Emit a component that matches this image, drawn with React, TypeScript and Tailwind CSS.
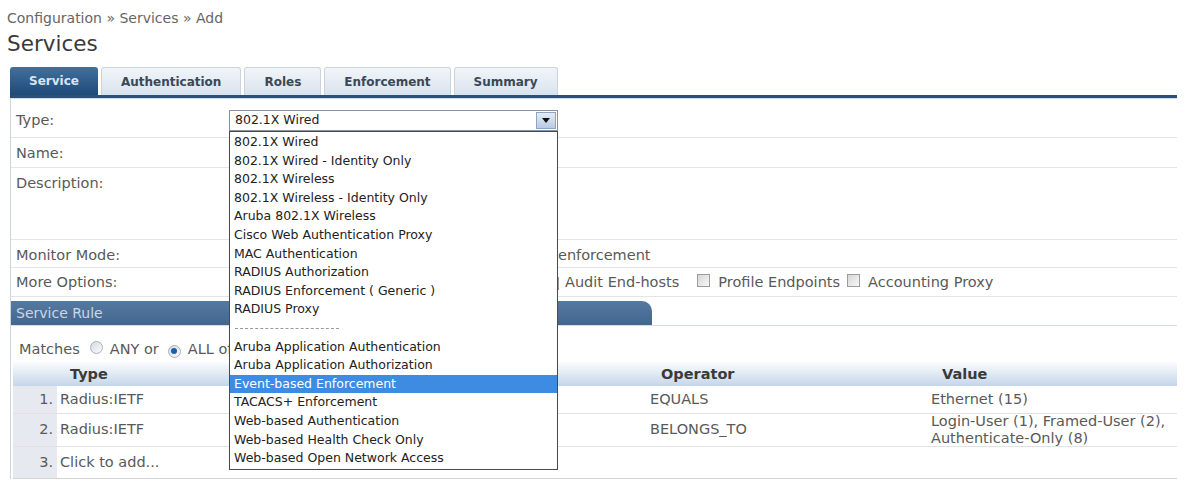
import React from "react";

// dropdown entries of the Type select
const serviceTypes: string[] = [
  "802.1X Wired",
  "802.1X Wired - Identity Only",
  "802.1X Wireless",
  "802.1X Wireless - Identity Only",
  "Aruba 802.1X Wireless",
  "Cisco Web Authentication Proxy",
  "MAC Authentication",
  "RADIUS Authorization",
  "RADIUS Enforcement ( Generic )",
  "RADIUS Proxy",
  "---",
  "Aruba Application Authentication",
  "Aruba Application Authorization",
  "Event-based Enforcement",
  "TACACS+ Enforcement",
  "Web-based Authentication",
  "Web-based Health Check Only",
  "Web-based Open Network Access",
];

const tabs = ["Service", "Authentication", "Roles", "Enforcement", "Summary"];

interface RuleRow {
  type: string;
  operator: string;
  value: string[];
  h: string;
}

const rules: RuleRow[] = [
  { type: "Radius:IETF", operator: "EQUALS", value: ["Ethernet (15)"], h: "h-[28px]" },
  {
    type: "Radius:IETF",
    operator: "BELONGS_TO",
    value: ["Login-User (1), Framed-User (2),", "Authenticate-Only (8)"],
    h: "h-[33px]",
  },
];

const Checkbox = () => (
  <span className="inline-block shrink-0 w-[13px] h-[13px] border border-[#9c9c9c] bg-linear-to-br from-[#d6d6d6] to-[#f8f8f8]" />
);

const Radio = ({ on }: { on?: boolean }) => (
  <span className="inline-flex shrink-0 items-center justify-center w-[13px] h-[13px] rounded-full border border-[#a9b1ba] bg-linear-to-br from-[#d5dbe1] to-[#fbfbfb]">
    {on && <span className="w-[6px] h-[6px] rounded-full bg-[#1d5ea6]" />}
  </span>
);

const TypeSelect = () => (
  <div className="relative w-[329px] h-[21px] border border-[#8094a8] bg-white flex items-center">
    <span className="pl-[5px] text-[12.5px] text-[#222]">802.1X Wired</span>
    <span className="absolute right-[1px] top-[1px] w-[20px] h-[17px] flex items-center justify-center border border-[#8ea4c0] bg-linear-to-b from-[#e3ecf7] to-[#b7cbe4]">
      <svg width="8" height="5" viewBox="0 0 8 5">
        <path d="M0 0h8L4 5z" fill="#111" />
      </svg>
    </span>

    {/* open list */}
    <div className="absolute left-[-1px] top-[20px] z-10 w-[329px] border border-[#4a4a4a] bg-white pt-[1px] pb-[1px]">
      {serviceTypes.map((item) =>
        item === "---" ? (
          <div key={item} className="h-[18.6px] pl-[5px] flex items-center">
            <span className="w-[104px] border-t border-dashed border-[#9a9a9a]" />
          </div>
        ) : (
          <div
            key={item}
            className={`h-[18.6px] pl-[4px] text-[12.5px] leading-[18.6px] whitespace-nowrap ${
              item === "Event-based Enforcement" ? "bg-[#3d8ce2] text-white" : "text-[#222]"
            }`}
          >
            {item}
          </div>
        )
      )}
    </div>
  </div>
);

export default function App() {
  return (
    <div className="w-[1185px] h-[484px] overflow-hidden bg-white text-[#595959] font-['DejaVu_Sans',Verdana,sans-serif]">
      <div className="pl-[7px] pt-[10px] text-[14px] leading-[16px] text-[#666]">
        Configuration » Services » Add
      </div>
      <h1 className="pl-[7px] mt-[6px] text-[21.5px] leading-[24px] text-[#3a3a3a]">Services</h1>

      <div className="ml-[10px] mr-[8px] mt-[11px]">
        {/* tabs */}
        <div className="flex gap-[3px] h-[28px]">
          {tabs.map((t, i) => (
            <div
              key={t}
              className={`px-[19px] flex items-center rounded-t-[3px] text-[12px] font-bold ${
                i === 0
                  ? "bg-linear-to-b from-[#41709f] to-[#1e4a79] text-[#d9e5f2]"
                  : "border border-b-0 border-[#c9d4df] bg-linear-to-b from-[#f1f5f9] to-[#d9e3ed] text-[#3a4858]"
              }`}
            >
              {t}
            </div>
          ))}
        </div>
        <div className="h-[4px] bg-[#2c4f74] border-b border-[#cfe0f0]" />

        <div className="border-l border-[#cfd5dc] text-[14.5px]">
          {/* Type */}
          <div className="flex items-center h-[39px] pt-[5px] border-b border-[#e4e4e4]">
            <div className="w-[218px] pl-[5px]">Type:</div>
            <TypeSelect />
          </div>

          {/* Name */}
          <div className="flex items-center h-[30px] pt-[3px] border-b border-[#e4e4e4]">
            <div className="w-[218px] pl-[5px]">Name:</div>
            <div className="w-[300px] h-[20px] border border-[#a5acb5]" />
          </div>

          {/* Description */}
          <div className="flex h-[72px] pt-[6px] border-b border-[#e4e4e4]">
            <div className="w-[218px] pl-[5px] leading-[18px]">Description:</div>
            <div className="w-[300px] h-[58px] border border-[#a5acb5]" />
          </div>

          {/* Monitor Mode */}
          <div className="flex items-center h-[28px] pt-[4px] border-b border-[#e4e4e4]">
            <div className="w-[218px] pl-[5px]">Monitor Mode:</div>
            <Checkbox />
            <span className="w-[316px] pl-[6px] whitespace-nowrap overflow-hidden">
              Enable to monitor network access without
            </span>
            <span>enforcement</span>
          </div>

          {/* More Options */}
          <div className="flex items-center h-[29px] pt-[2px] border-b border-[#e4e4e4]">
            <div className="w-[218px] pl-[5px]">More Options:</div>
            <Checkbox />
            <span className="w-[304px] pl-[6px] whitespace-nowrap overflow-hidden">Authorization</span>
            <Checkbox />
            <span className="pl-[6px]">Audit End-hosts</span>
            <span className="ml-[18px]">
              <Checkbox />
            </span>
            <span className="pl-[8px]">Profile Endpoints</span>
            <span className="ml-[7px]">
              <Checkbox />
            </span>
            <span className="pl-[8px]">Accounting Proxy</span>
          </div>

          {/* Service Rule */}
          <div className="mt-[4px] flex h-[25px] border-b border-[#d8dde3]">
            <div className="w-[641px] pl-[5px] flex items-center rounded-tr-[10px] bg-linear-to-b from-[#5679a0] to-[#42668e] text-[14px] text-[#c9d7e6]">
              Service Rule
            </div>
          </div>

          <div className="flex items-end h-[36px] pb-[1px] pl-[8px] whitespace-nowrap">
            <span>Matches</span>
            <span className="ml-[10px]"><Radio /></span>
            <span className="ml-[7px]">ANY or</span>
            <span className="ml-[9px]"><Radio on /></span>
            <span className="ml-[7px]">ALL of the following conditions:</span>
          </div>

          {/* rule table */}
          <div className="ml-[2px]">
            <div className="flex items-center h-[24px] pt-[1px] bg-linear-to-b from-[#fbfcfe] to-[#c5d6ea] font-bold text-[#3a3a3a]">
              <div className="w-[44px]" />
              <div className="w-[583px] pl-[13px]">Type</div>
              <div className="w-[281px] pl-[21px]">Operator</div>
              <div className="flex-1 pl-[21px]">Value</div>
            </div>

            {rules.map((r, i) => (
              <div key={i} className={`flex items-stretch border-b border-[#e2e2e2] ${r.h}`}>
                <div className="w-[44px] pr-[4px] flex items-center justify-end bg-[#e6eaf0]">{i + 1}.</div>
                <div className="w-[583px] pl-[3px] flex items-center">{r.type}</div>
                <div className="w-[281px] pl-[10px] flex items-center">{r.operator}</div>
                <div className="flex-1 pl-[10px] flex flex-col justify-center leading-[17px] whitespace-nowrap">
                  {r.value.map((v) => (
                    <span key={v}>{v}</span>
                  ))}
                </div>
              </div>
            ))}

            <div className="flex h-[32px] border-b border-[#d4d4d4]">
              <div className="w-[44px] pr-[4px] flex items-center justify-end bg-[#e6eaf0]">3.</div>
              <div className="pl-[3px] flex items-center">Click to add...</div>
            </div>
          </div>
        </div>
      </div>
    </div>
  );
}
